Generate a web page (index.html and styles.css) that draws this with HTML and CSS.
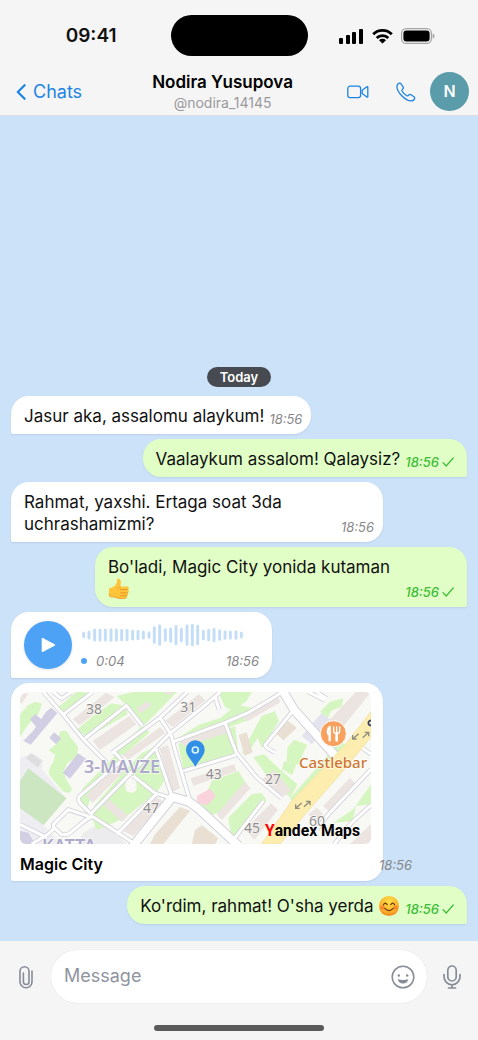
FILE: index.html
```html
<!DOCTYPE html>
<html lang="uz">
<head>
    <meta charset="UTF-8">
    <meta name="viewport" content="width=device-width, initial-scale=1.0">
    <title>Nodira Yusupova</title>
    <link rel="stylesheet" href="styles.css">
</head>
<body>

<header class="top">
    <!-- Status bar -->
    <div class="status-bar">
        <span class="clock">09:41</span>
        <span class="island"></span>
        <div class="status-icons">
            <svg width="25" height="16" viewBox="0 0 25 16">
                <rect x="0" y="10" width="4" height="6" rx="1"/>
                <rect x="7" y="7" width="4" height="9" rx="1"/>
                <rect x="13" y="4" width="4" height="12" rx="1"/>
                <rect x="20" y="1" width="4" height="15" rx="1"/>
            </svg>
            <svg width="21" height="16" viewBox="0 0 21 16">
                <g fill="none" stroke="#000" stroke-width="2.8">
                    <path d="M1.2 6.2a13.2 13.2 0 0 1 18.6 0"/>
                    <path d="M4.7 10a8.2 8.2 0 0 1 11.6 0"/>
                </g>
                <path d="M7 12.2a5 5 0 0 1 7 0L10.5 15.6z"/>
            </svg>
            <svg width="34" height="16" viewBox="0 0 34 16">
                <rect x="0.6" y="0.6" width="29.8" height="14.8" rx="4.6" fill="none" stroke="#a5a5a5" stroke-width="1.2"/>
                <rect x="2.4" y="2.4" width="26.2" height="11.2" rx="3"/>
                <path d="M31.6 5.4v5.2c1.2-.4 2-1.4 2-2.6s-.8-2.2-2-2.6z" fill="#a5a5a5"/>
            </svg>
        </div>
    </div>

    <!-- Chat header -->
    <div class="chat-header">
        <a class="back" href="#">
            <svg width="10" height="16" viewBox="0 0 10 16">
                <path d="M8.6 1.2L1.8 8l6.8 6.8" fill="none" stroke="currentColor" stroke-width="2.2" stroke-linecap="round" stroke-linejoin="round"/>
            </svg>
            Chats
        </a>
        <div class="contact">
            <h1>Nodira Yusupova</h1>
            <p>@nodira_14145</p>
        </div>
        <button class="icon-button" type="button" aria-label="Video call">
            <svg width="22" height="14" viewBox="0 0 22 14" fill="none" stroke="currentColor" stroke-width="1.3" stroke-linejoin="round">
                <rect x="0.8" y="1.2" width="12.8" height="11.4" rx="2.4"/>
                <path d="M15.2 5.2l4.6-3.4q1-.6 1 .5v9.2q0 1.1-1 .5l-4.6-3.4z"/>
            </svg>
        </button>
        <button class="icon-button" type="button" aria-label="Call">
            <svg width="20" height="20" viewBox="0 0 20 20" fill="none" stroke="currentColor" stroke-width="1.3" stroke-linejoin="round">
                <path d="M3.4 1.1C2.4 1.3 1.2 2.4 1 3.8c-.4 3 2 7 4.8 9.9s6.6 5.5 9.8 5.2c1.6-.2 2.9-1.4 3.1-2.5.1-.7-.2-1.2-.7-1.6l-3-2.1c-.7-.5-1.4-.4-2 .1l-1 .9c-.4.3-.8.3-1.200.1-2.1-1.200-3.7-2.900-4.8-4.8-.2-.4-.2-.8.1-1.2l.9-1.1c.5-.6.5-1.2.1-1.9L5 1.8c-.4-.6-.9-.8-1.6-.7z"/>
            </svg>
        </button>
        <span class="avatar">N</span>
    </div>
</header>

<main class="chat">
    <span class="day">Today</span>

    <div class="bubble in">
        <p>Jasur aka, assalomu alaykum!</p>
        <time>18:56</time>
    </div>

    <div class="bubble out">
        <p>Vaalaykum assalom! Qalaysiz?</p>
        <time>18:56 <svg class="tick" width="12" height="10" viewBox="0 0 12 10"><path d="M1 5.6l3.2 3.4L11.2 1"/></svg></time>
    </div>

    <div class="bubble in">
        <p>Rahmat, yaxshi. Ertaga soat 3da uchrashamizmi?</p>
        <time>18:56</time>
    </div>

    <div class="bubble out">
        <p>Bo'ladi, Magic City yonida kutaman
            <svg class="emoji" viewBox="0 0 24 24" role="img" aria-label="thumbs up">
                <path d="M2 11c2.5-.3 4.5-1.3 6-3C9.5 6.3 9.7 4.5 9.8 2.3c.1-1.7 1.3-2.1 2.4-1.5 1.8 1 2.3 3.6 1.6 6.2l-.5 2.2h7.5c2.4 0 2.7 3 .8 3.5 1.7.4 1.5 3.2-.3 3.5 1.3.6 1 2.9-.6 3.2.8.9.1 2.6-1.5 2.7-3.2.3-6.7.3-9.2-.4-2.3-.6-4-1.2-7-1.2-1.3 0-2-1.5-2-4.7C1 13 1 11.2 2 11z" fill="#fec53a"/>
                <path d="M13.5 12.7h7.7M13.8 16.2h7.3M13.8 19.4h6.5" stroke="#e3922a" stroke-width="1" stroke-linecap="round" fill="none"/>
                <path d="M13.3 9.2c-1.5.5-2.3 1.5-2.3 3" stroke="#ec9f2c" stroke-width="1" stroke-linecap="round" fill="none"/>
                <path d="M1.2 17.5c.3 2 .8 3 1.8 3 3 0 4.7.6 7 1.2 2.5.7 6 .7 9.2.4" stroke="#ef9c2b" stroke-width="1" fill="none"/>
            </svg>
        </p>
        <time>18:56 <svg class="tick" width="12" height="10" viewBox="0 0 12 10"><path d="M1 5.6l3.2 3.4L11.2 1"/></svg></time>
    </div>

    <!-- Voice message -->
    <div class="bubble in voice">
        <button class="play" type="button" aria-label="Play">
            <svg width="16" height="16" viewBox="0 0 16 16"><path d="M1.7 1.7v12.6q0 1.2 1.1.6L14.6 8.7q1.2-.7 0-1.4L2.8 1.1q-1.1-.6-1.1.6z" fill="#fff"/></svg>
        </button>
        <div class="voice-body">
            <svg class="wave" viewBox="14 28 486 72">
                <path d="M22 59v10M38 55v18M55 49v30M71 49v30M87 49v30M104 48v32M120 49v30M136 50v28M152 50v28M169 52v24M185 53v22M201 55v18M218 57v14M234 42v44M250 36v56M267 48v32M283 45v38M299 38v52M315 47v34M332 36v56M348 35v58M364 38v52M381 53v22M397 50v28M413 47v34M430 51v26M446 54v20M462 55v18M479 54v20M495 58v12"/>
            </svg>
            <div class="voice-info">
                <span class="dot"></span>
                <span>0:04</span>
                <time>18:56</time>
            </div>
        </div>
    </div>

    <!-- Location -->
    <div class="bubble in place">
        <svg class="map" viewBox="60 33 1053 456" role="img" aria-label="Map">
            <rect x="60" y="33" width="1053" height="456" fill="#f8f8f4"/>
            <path d="M60 230l40-12 30 20-5 25 75 90-70 80 60 60H60z" fill="#eeeef2"/>
            <path d="M250 455l60-35 70 69H230z" fill="#ececee"/>
            <path d="M905 165l60-70 30 25-60 70z" fill="#e4e4ee"/>

            <!-- greenery -->
            <g fill="#d6f6c1">
                <path d="M60 100L85 72l20-10 22 6-12 32-30 30-25 38z"/>
                <path d="M175 78l55-45h30v20l-62 48z"/>
                <path d="M232 145l50-42 52-36 44 8 4 25-120 70z"/>
                <path d="M350 45l50-12h130l-48 50-52 52-28-40z"/>
                <path d="M180 152q20-10 30 15l24 30-4 32-28 18-12 25 10 25 15 25q0 20-25 10l-42-50q-5-20 10-35l8-25-20-14 22-18z"/>
                <path d="M345 212l80-76 24 18-80 70z"/>
                <path d="M232 360l18-40 98-100 24 18-100 110-12 40z"/>
                <path d="M285 372l90-105 50-50 42-22 26 105-22 32-96 78-85 38-15-40z"/>
                <path d="M525 176l75-46 60-18 50-40 60 10-10 30-70 25-165 48z"/>
                <path d="M535 188l170-52 10 78-165 52z"/>
                <path d="M655 33h100l-15 27-40 30-25-12z"/>
                <path d="M725 215l60-110 40-14 12 30-52 80-12-30-32 50z"/>
                <path d="M760 228l32-8 40 38 60 52-20 40-60-50z"/>
                <path d="M862 200l20-24 40 15-14 30-10 30-38-10z"/>
                <path d="M852 240l38 8-14 35-30-18z"/>
                <path d="M605 370l30-70 80-30 25 40-70 80-60 20z"/>
                <path d="M685 410l70-70 30-5 15 25-65 65-40 50z"/>
                <path d="M960 92l30-30 40-10-4 24-32 14-10 20z"/>
                <path d="M1000 425l60-40 53-75v60l-45 5-10 45z"/>
                <path d="M870 352l150-172 15 10-150 180z"/>
            </g>
            <path d="M60 300l25-38 114 90-68 80-71-50z" fill="#cbe6c1"/>
            <path d="M378 285q30-10 32 30 2 20-16 20-20 0-18-20z" fill="#f8f8f4"/>

            <!-- buildings -->
            <g fill="#ebe4e1">
                <path d="M218 115l100-80 26 14-104 84z"/>
                <path d="M278 180l110-75 22 24-110 78z"/>
                <path d="M368 222l112-84 16 18-112 80z"/>
                <path d="M258 345l100-104 24 20-104 104z"/>
                <path d="M310 372l18-16 56 48-18 18z"/>
                <path d="M370 450l94-105 28 18-92 102z"/>
                <path d="M478 202l26-10 36 130-26 12z"/>
                <path d="M410 82l34-22 10 14-34 24z"/>
                <path d="M496 120l100-80 20 18-98 80z"/>
                <path d="M535 180l140-48 8 24-130 40z"/>
                <path d="M572 292l130-42 8 20-130 44z"/>
                <path d="M725 105l105-62 12 20-100 58z"/>
                <path d="M650 400l85-98 16 20-85 94z"/>
                <path d="M780 300l42-32 52 60-22 18z"/>
                <path d="M735 445l78-78 20 20-70 90z"/>
                <path d="M985 120l90-95 38 8-105 130z"/>
                <path d="M970 375l80-85 20 22-82 80z"/>
                <path d="M1050 489l63-60v60z"/>
                <path d="M925 400l25-20 20 20-25 20z"/>
                <path d="M495 33h25l-12 12z"/>
            </g>
            <g fill="#e9dfd3">
                <path d="M465 460l75-82 30 12-80 99h-40z"/>
                <path d="M585 448l20-16 50 40-10 17h-70z"/>
                <path d="M716 162l24-8 18 60-24 10z"/>
                <path d="M826 155l38-35 26 20-40 38z"/>
            </g>
            <g fill="#d2cee4">
                <path d="M90 115l16-16 20 18-18 20z"/>
                <path d="M138 92l16-12 18 16-80 95-22-12 30-30z"/>
                <path d="M148 170l14-16 22 18-16 18z"/>
                <path d="M188 275l46-58 24 16-48 60z"/>
                <path d="M60 450l25 5 20 34H60z"/>
            </g>
            <path d="M78 232l14-16 34 24-12 20z" fill="#dedee0"/>
            <path d="M60 50l10-12h15l-20 30-5-4z" fill="#ebe4e1"/>
            <path d="M590 345l40-22 17 22-24 28-30-8z" fill="#fbd3df"/>

            <!-- streets: grey edge first, white fill on top -->
            <defs>
                <g id="lanes">
                    <path d="M130 33l58 66 62 76 70 70M190 100l88-67M255 172l124-98 48 60M335 216l145-106 82-77"/>
                    <path d="M342 212l24 26-128 108q-6 10 4 22l34 34M275 396l236-240 100-80 50-43M480 110l32 48 14 52 46 156"/>
                    <path d="M468 204l48 142M400 285l70 55M160 33l25 20 30-20"/>
                    <path d="M205 386l55 18q12 6-4 14l-46 38q-10 8-26 4l-22-20q-6-8 4-16zM262 415l14-10"/>
                    <path d="M275 405l75 48 55 36M350 460l120-122 40 12M60 430l80 40M95 489l50-30 20-20"/>
                    <path d="M518 183l157-58 70-30 80-48 20-14M645 45l12 40M675 125l34 90 62 75 74 62M550 270l158-48"/>
                    <path d="M880 88l-85 104q0 8 30 22M790 360l-88 114-2 15M1113 265L985 400l-34 44M1113 372l-60 55-50 62"/>
                    <path d="M925 33l50 25M950 33l30 20M1080 195l33 25"/>
                </g>
                <g id="avenues">
                    <path d="M845 25l38 62 132 148"/>
                    <path d="M395 500l122-152 50 14 30 22 118 110"/>
                </g>
            </defs>
            <use href="#lanes" class="lane-edge"/>
            <use href="#avenues" class="avenue-edge"/>
            <use href="#lanes" class="lane"/>
            <use href="#avenues" class="avenue"/>
            <path d="M785 489l90-129 160-168 78-100v76l-98 118-100 114-75 89z" fill="#fdeeb0" stroke="#f3e4a8" stroke-width="3"/>
            <g fill="none" stroke="#8e8d80" stroke-width="4">
                <path d="M905 366l-18 16m0-12v12h12M912 377l18-16m-12 0h12v12M1076 158l-18 16m0-12v12h12M1088 170l18-16m-12 0h12v12"/>
            </g>

            <!-- labels -->
            <g class="house">
                <text x="258" y="98">38</text>
                <text x="541" y="94">31</text>
                <text x="429" y="396">47</text>
                <text x="617" y="295">43</text>
                <text x="795" y="308">27</text>
                <text x="732" y="456">45</text>
                <text x="927" y="435">60</text>
            </g>
            <g class="district">
                <text x="252" y="276">3-MAVZE</text>
                <text x="126" y="513">KATTA</text>
            </g>
            <circle cx="1000" cy="158" r="39" fill="#f8a15f" stroke="#fff" stroke-width="3"/>
            <g fill="none" stroke="#fff" stroke-linecap="round">
                <path d="M1010 178v-20" stroke-width="8"/>
                <path d="M1001 138v12q0 8 9 8t9-8v-12M1010 138v16" stroke-width="4"/>
                <path d="M989 138v40" stroke-width="7"/>
                <path d="M985 142q-4 10 0 18" stroke-width="6"/>
            </g>
            <text class="cafe" x="897" y="262">Castlebar</text>
            <path d="M1113 118q-8 2-8 8t8 8" fill="none" stroke="#3c4266" stroke-width="5"/>
            <path d="M586 258c-8-18-28-34-28-52a28 28 0 0 1 56 0c0 18-20 34-28 52z" fill="#328fe6"/>
            <circle cx="586" cy="207" r="9" fill="none" stroke="#d9f5fb" stroke-width="5"/>
            <text class="brand" x="795" y="465"><tspan fill="#f00">Y</tspan>andex Maps</text>
        </svg>
        <h2>Magic City</h2>
        <time>18:56</time>
    </div>

    <div class="bubble out">
        <p>Ko'rdim, rahmat! O'sha yerda
            <svg class="emoji" viewBox="0 0 24 24" role="img" aria-label="smile">
                <defs>
                    <radialGradient id="face" cx="50%" cy="30%" r="75%">
                        <stop offset="0" stop-color="#ffe04a"/>
                        <stop offset="0.6" stop-color="#fdb52f"/>
                        <stop offset="1" stop-color="#ef7f1c"/>
                    </radialGradient>
                </defs>
                <circle cx="12" cy="12" r="11" fill="url(#face)"/>
                <circle cx="5" cy="13.5" r="2.4" fill="#f2682c" opacity="0.6"/>
                <circle cx="19" cy="13.5" r="2.4" fill="#f2682c" opacity="0.6"/>
                <path d="M6 10.5q2-3.4 4 0M14 10.5q2-3.4 4 0M7.4 14.6q4.6 5 9.2 0" fill="none" stroke="#6b3410" stroke-width="1.3" stroke-linecap="round"/>
            </svg>
        </p>
        <time>18:56 <svg class="tick" width="12" height="10" viewBox="0 0 12 10"><path d="M1 5.6l3.2 3.4L11.2 1"/></svg></time>
    </div>
</main>

<!-- Message input -->
<footer class="bottom">
    <form class="composer">
        <button class="icon-button" type="button" aria-label="Attach">
            <svg width="14" height="24" viewBox="0 0 14 24" fill="none" stroke="currentColor" stroke-width="1.6" stroke-linecap="round">
                <path d="M13 6v10.7a6 6 0 0 1-12 0V6.2a4.5 4.5 0 0 1 9 0v10.5a2.8 2.8 0 0 1-5.6 0V8"/>
            </svg>
        </button>
        <div class="field">
            <input type="text" placeholder="Message" aria-label="Message">
            <button class="icon-button" type="button" aria-label="Stickers">
                <svg width="24" height="24" viewBox="0 0 24 24">
                    <circle cx="12" cy="12" r="10.8" fill="none" stroke="currentColor" stroke-width="1.5"/>
                    <circle cx="7.8" cy="10.5" r="1.2" fill="currentColor"/>
                    <circle cx="16.2" cy="10.5" r="1.2" fill="currentColor"/>
                    <path d="M6.8 14.2q5.2 1.4 10.4 0-.8 4.4-5.2 4.4t-5.2-4.4z" fill="currentColor"/>
                </svg>
            </button>
        </div>
        <button class="icon-button" type="button" aria-label="Record">
            <svg width="18" height="24" viewBox="0 0 18 24" fill="none" stroke="currentColor" stroke-width="1.7" stroke-linecap="round">
                <rect x="4.8" y="1" width="8.4" height="15" rx="4.2"/>
                <path d="M1 9.5v2.3a8 8 0 0 0 16 0V9.5M9 19.8V23M5.5 23h7"/>
            </svg>
        </button>
    </form>
    <div class="home-bar"></div>
</footer>

</body>
</html>
```

FILE: styles.css
```css
* {
    box-sizing: border-box;
}

body {
    font-family: Inter, "Liberation Sans", sans-serif;
    margin: 0;
    min-height: 100vh;
    display: flex;
    flex-direction: column;
    background-color: #f5f5f5;
    color: #111;
}

h1, h2, p {
    margin: 0;
}

svg {
    display: block;
}

button {
    padding: 0;
    border: none;
    background: none;
    color: inherit;
    cursor: pointer;
}

.icon-button {
    display: flex;
    align-items: center;
    justify-content: center;
}

/* Status bar */
.top {
    border-bottom: 1px solid #dcdfe2;
}

.status-bar {
    display: grid;
    grid-template-columns: 1fr 137px 1fr;
    align-items: center;
    padding-top: 15px;
}

.clock {
    padding-right: 54px;
    font-size: 19px;
    font-weight: 600;
    text-align: right;
}

.island {
    height: 41px;
    border-radius: 21px;
    background-color: #000;
}

.status-icons {
    display: flex;
    align-items: center;
    gap: 8px;
    padding-left: 31px;
}

/* Chat header */
.chat-header {
    display: flex;
    align-items: center;
    height: 59px;
    padding: 0 9px 0 16px;
    color: #1c84e4;
}

.chat-header .icon-button {
    width: 22px;
    margin-right: 26px;
}

.chat-header .icon-button + .icon-button {
    margin-right: 13px;
}

.back {
    display: flex;
    align-items: center;
    gap: 7px;
    margin-top: 12px;
    padding-right: 16px;
    font-size: 18px;
    color: inherit;
    text-decoration: none;
}

.chat-header .icon-button,
.avatar {
    margin-top: 12px;
}

.contact {
    flex: 1;
    margin-top: 12px;
    text-align: center;
}

.contact h1 {
    font-size: 17px;
    font-weight: 600;
    line-height: 22px;
    color: #000;
}

.contact p {
    font-size: 14px;
    line-height: 20px;
    color: #9a9a9d;
}

.avatar {
    width: 39px;
    height: 39px;
    border-radius: 50%;
    background-color: #5b9cab;
    color: #fff;
    font-size: 16px;
    font-weight: 600;
    line-height: 39px;
    text-align: center;
}

/* Messages */
.chat {
    flex: 1;
    display: flex;
    flex-direction: column;
    justify-content: flex-end;
    align-items: flex-start;
    gap: 5px;
    padding: 17px 11px;
    background-color: #cbe2f9;
}

.day {
    align-self: center;
    margin-bottom: 4px;
    padding: 0 13px;
    border-radius: 10px;
    background-color: #474b51;
    color: #fff;
    font-size: 13px;
    font-weight: 600;
    line-height: 20px;
}

.bubble {
    position: relative;
    display: flex;
    align-items: flex-end;
    gap: 5px;
    max-width: 372px;
    padding: 9px 9px 7px 13px;
    border-radius: 18px 18px 18px 2px;
    background-color: #fff;
    box-shadow: 0 1px 2px rgba(0, 0, 0, 0.08);
    font-size: 17px;
    line-height: 22px;
}

.bubble p {
    flex: 1;
}

.bubble time {
    display: flex;
    align-items: center;
    gap: 3px;
    font-size: 13px;
    font-style: italic;
    line-height: 16px;
    color: #87878a;
}

.out {
    align-self: flex-end;
    padding-right: 13px;
    border-radius: 18px 18px 2px 18px;
    background-color: #e0fec6;
}

.bubble.out time {
    color: #3fbd38;
    font-weight: 500;
}

.tick {
    fill: none;
    stroke: currentColor;
    stroke-width: 1.3;
    stroke-linecap: round;
}

.emoji {
    display: inline-block;
    width: 22px;
    height: 22px;
    vertical-align: bottom;
}

/* Voice message */
.voice {
    align-items: center;
    gap: 9px;
    padding: 9px 13px;
}

.play {
    display: flex;
    align-items: center;
    justify-content: center;
    width: 48px;
    height: 48px;
    border-radius: 50%;
    background-color: #4ea2f6;
    box-shadow: 0 1px 3px rgba(0, 0, 0, 0.12);
}

.voice-body {
    width: 178px;
    padding-top: 2px;
}

.wave {
    width: 162px;
    height: 24px;
    fill: none;
    stroke: #c5def8;
    stroke-width: 9;
    stroke-linecap: round;
}

.voice-info {
    display: flex;
    align-items: center;
    gap: 9px;
    margin-top: 6px;
    color: #87878a;
    font-size: 13px;
    font-style: italic;
    line-height: 16px;
}

.voice-info time {
    margin-left: auto;
}

.dot {
    width: 6px;
    height: 6px;
    border-radius: 50%;
    background-color: #4ea2f6;
}

/* Location */
.place {
    display: block;
    width: 372px;
    padding: 9px 12px 7px 9px;
}

.map {
    width: 100%;
    border-radius: 6px;
}

.lane-edge {
    fill: none;
    stroke: #d3d1dc;
    stroke-width: 14;
}

.lane {
    fill: none;
    stroke: #fff;
    stroke-width: 9;
}

.avenue-edge {
    fill: none;
    stroke: #d3d1dc;
    stroke-width: 30;
}

.avenue {
    fill: none;
    stroke: #fff;
    stroke-width: 24;
}

.map text {
    font-family: "Noto Sans", sans-serif;
    paint-order: stroke;
    stroke: rgba(255, 255, 255, 0.7);
    stroke-width: 5;
}

.house {
    font-size: 42px;
    fill: #8f8d8c;
}

.district {
    font-size: 54px;
    font-weight: 600;
    fill: #aeaacb;
}

.map .cafe {
    font-size: 45px;
    font-weight: 500;
    fill: #d0762f;
}

.map .brand {
    font-family: Roboto, sans-serif;
    font-size: 47px;
    font-weight: 700;
    stroke: none;
}

.place h2 {
    margin-top: 10px;
    font-size: 16px;
    font-weight: 600;
    line-height: 20px;
    color: #000;
}

.place time {
    position: absolute;
    right: -29px;
    bottom: 8px;
}

/* Message input */
.bottom {
    padding: 9px 16px;
}

.composer {
    display: flex;
    align-items: center;
    gap: 15px;
    color: #868c98;
}

.composer > .icon-button {
    width: 20px;
}

.field {
    flex: 1;
    display: flex;
    align-items: center;
    height: 53px;
    padding: 0 12px 0 13px;
    border-radius: 27px;
    background-color: #fff;
    box-shadow: 0 0 1px rgba(0, 0, 0, 0.15);
}

.field input {
    flex: 1;
    min-width: 0;
    border: none;
    outline: none;
    background: none;
    padding: 0 0 3px;
    font-family: inherit;
    font-size: 18px;
}

.field input::placeholder {
    color: #8f949f;
}

.home-bar {
    width: 170px;
    height: 6px;
    margin: 22px auto 0;
    border-radius: 3px;
    background-color: #5a5a5a;
}
```
